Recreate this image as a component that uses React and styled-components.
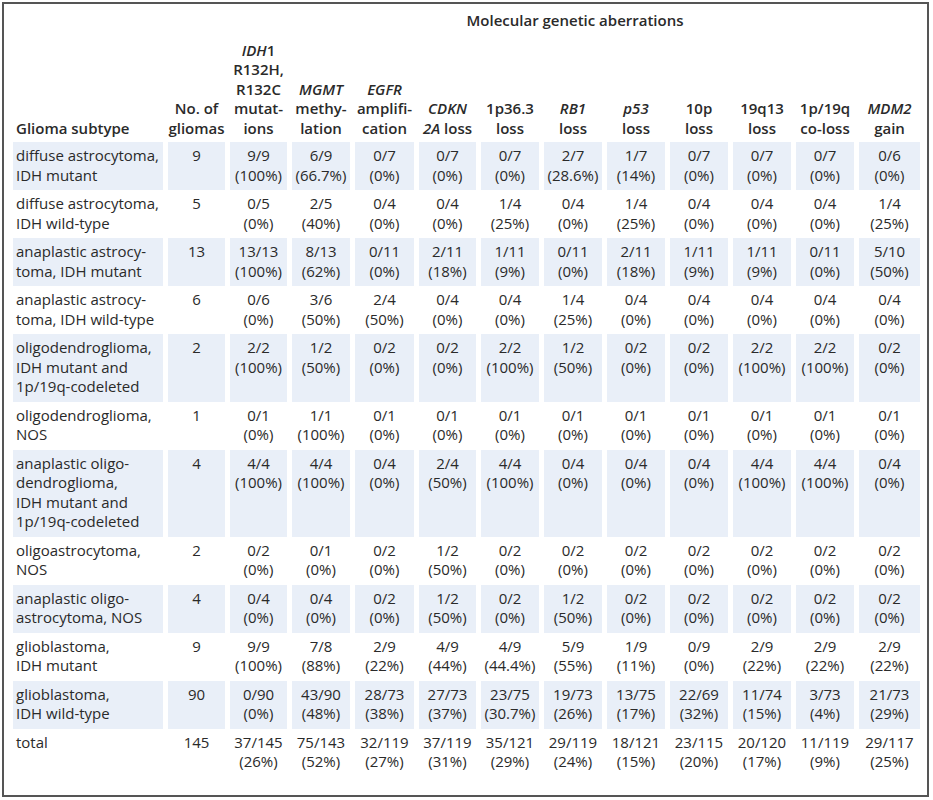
import React from "react";
import styled, { createGlobalStyle } from "styled-components";

const GlobalStyle = createGlobalStyle`
  html, body {
    margin: 0;
    padding: 0;
    background: #ffffff;
  }
  body {
    font-family: "Open Sans", "Noto Sans", sans-serif;
    color: #2a2a2a;
  }
`;

let FrameStyle = styled.div`
  box-sizing: border-box;
  margin: 2px;
  width: 927px;
  height: 795px;
  border: 2px solid #555555;
  padding: 0 0 0 4px;
  background: #ffffff;
`;

let TableStyle = styled.table`
  table-layout: fixed;
  border-collapse: separate;
  border-spacing: 5px 0;
  font-size: 15px;
  line-height: 19.5px;
  color: #2a2a2a;
`;

let GroupHeadStyle = styled.th`
  padding: 7px 0 10px;
  text-align: center;
  font-weight: 600;
  white-space: nowrap;
`;

let HeadStyle = styled.th`
  padding: 0 0 4px ${(p) => (p.$left ? "3px" : "0")};
  text-align: ${(p) => (p.$left ? "left" : "center")};
  vertical-align: bottom;
  font-weight: 600;
  white-space: nowrap;
`;

let RowStyle = styled.tr`
  & > td {
    background: ${(p) => (p.$shaded ? "#e9eff8" : "transparent")};
  }
`;

let NameCellStyle = styled.td`
  padding: 4px 0 5px 3px;
  text-align: left;
  vertical-align: top;
  white-space: nowrap;
`;

let ValueCellStyle = styled.td`
  padding: 4px 0 5px;
  text-align: center;
  vertical-align: top;
  white-space: nowrap;
`;

const widths = [150, 57, 57, 58, 59, 57, 58, 58, 58, 58, 58, 58, 61];

const heads = [
  [<i key="a">IDH</i>, "1", <br key="b" />, "R132H,", <br key="c" />, "R132C", <br key="d" />, "mutat-", <br key="e" />, "ions"],
  [<i key="a">MGMT</i>, <br key="b" />, "methy-", <br key="c" />, "lation"],
  [<i key="a">EGFR</i>, <br key="b" />, "amplifi-", <br key="c" />, "cation"],
  [<i key="a">CDKN</i>, <br key="b" />, <i key="c">2A</i>, " loss"],
  ["1p36.3", <br key="b" />, "loss"],
  [<i key="a">RB1</i>, <br key="b" />, "loss"],
  [<i key="a">p53</i>, <br key="b" />, "loss"],
  ["10p", <br key="b" />, "loss"],
  ["19q13", <br key="b" />, "loss"],
  ["1p/19q", <br key="b" />, "co-loss"],
  [<i key="a">MDM2</i>, <br key="b" />, "gain"],
];

const rows = [
  [["diffuse astrocytoma,", "IDH mutant"], "9", ["9/9", "100%"], ["6/9", "66.7%"], ["0/7", "0%"], ["0/7", "0%"], ["0/7", "0%"], ["2/7", "28.6%"], ["1/7", "14%"], ["0/7", "0%"], ["0/7", "0%"], ["0/7", "0%"], ["0/6", "0%"]],
  [["diffuse astrocytoma,", "IDH wild-type"], "5", ["0/5", "0%"], ["2/5", "40%"], ["0/4", "0%"], ["0/4", "0%"], ["1/4", "25%"], ["0/4", "0%"], ["1/4", "25%"], ["0/4", "0%"], ["0/4", "0%"], ["0/4", "0%"], ["1/4", "25%"]],
  [["anaplastic astrocy-", "toma, IDH mutant"], "13", ["13/13", "100%"], ["8/13", "62%"], ["0/11", "0%"], ["2/11", "18%"], ["1/11", "9%"], ["0/11", "0%"], ["2/11", "18%"], ["1/11", "9%"], ["1/11", "9%"], ["0/11", "0%"], ["5/10", "50%"]],
  [["anaplastic astrocy-", "toma, IDH wild-type"], "6", ["0/6", "0%"], ["3/6", "50%"], ["2/4", "50%"], ["0/4", "0%"], ["0/4", "0%"], ["1/4", "25%"], ["0/4", "0%"], ["0/4", "0%"], ["0/4", "0%"], ["0/4", "0%"], ["0/4", "0%"]],
  [["oligodendroglioma,", "IDH mutant and", "1p/19q-codeleted"], "2", ["2/2", "100%"], ["1/2", "50%"], ["0/2", "0%"], ["0/2", "0%"], ["2/2", "100%"], ["1/2", "50%"], ["0/2", "0%"], ["0/2", "0%"], ["2/2", "100%"], ["2/2", "100%"], ["0/2", "0%"]],
  [["oligodendroglioma,", "NOS"], "1", ["0/1", "0%"], ["1/1", "100%"], ["0/1", "0%"], ["0/1", "0%"], ["0/1", "0%"], ["0/1", "0%"], ["0/1", "0%"], ["0/1", "0%"], ["0/1", "0%"], ["0/1", "0%"], ["0/1", "0%"]],
  [["anaplastic oligo-", "dendroglioma,", "IDH mutant and", "1p/19q-codeleted"], "4", ["4/4", "100%"], ["4/4", "100%"], ["0/4", "0%"], ["2/4", "50%"], ["4/4", "100%"], ["0/4", "0%"], ["0/4", "0%"], ["0/4", "0%"], ["4/4", "100%"], ["4/4", "100%"], ["0/4", "0%"]],
  [["oligoastrocytoma,", "NOS"], "2", ["0/2", "0%"], ["0/1", "0%"], ["0/2", "0%"], ["1/2", "50%"], ["0/2", "0%"], ["0/2", "0%"], ["0/2", "0%"], ["0/2", "0%"], ["0/2", "0%"], ["0/2", "0%"], ["0/2", "0%"]],
  [["anaplastic oligo-", "astrocytoma, NOS"], "4", ["0/4", "0%"], ["0/4", "0%"], ["0/2", "0%"], ["1/2", "50%"], ["0/2", "0%"], ["1/2", "50%"], ["0/2", "0%"], ["0/2", "0%"], ["0/2", "0%"], ["0/2", "0%"], ["0/2", "0%"]],
  [["glioblastoma,", "IDH mutant"], "9", ["9/9", "100%"], ["7/8", "88%"], ["2/9", "22%"], ["4/9", "44%"], ["4/9", "44.4%"], ["5/9", "55%"], ["1/9", "11%"], ["0/9", "0%"], ["2/9", "22%"], ["2/9", "22%"], ["2/9", "22%"]],
  [["glioblastoma,", "IDH wild-type"], "90", ["0/90", "0%"], ["43/90", "48%"], ["28/73", "38%"], ["27/73", "37%"], ["23/75", "30.7%"], ["19/73", "26%"], ["13/75", "17%"], ["22/69", "32%"], ["11/74", "15%"], ["3/73", "4%"], ["21/73", "29%"]],
  [["total"], "145", ["37/145", "26%"], ["75/143", "52%"], ["32/119", "27%"], ["37/119", "31%"], ["35/121", "29%"], ["29/119", "24%"], ["18/121", "15%"], ["23/115", "20%"], ["20/120", "17%"], ["11/119", "9%"], ["29/117", "25%"]],
];

const Lines = ({ items }) =>
  items.map((t, i) => (
    <React.Fragment key={i}>
      {i > 0 && <br />}
      {t}
    </React.Fragment>
  ));

const App = () => {
  return (
    <>
      <GlobalStyle />
      <FrameStyle>
        <TableStyle>
          <colgroup>
            {widths.map((w, i) => (
              <col key={i} style={{ width: w }} />
            ))}
          </colgroup>
          <thead>
            <tr>
              <th />
              <th />
              <GroupHeadStyle colSpan={11}>Molecular genetic aberrations</GroupHeadStyle>
            </tr>
            <tr>
              <HeadStyle $left>Glioma subtype</HeadStyle>
              <HeadStyle>
                No. of
                <br />
                gliomas
              </HeadStyle>
              {heads.map((h, i) => (
                <HeadStyle key={i}>{h}</HeadStyle>
              ))}
            </tr>
          </thead>
          <tbody>
            {rows.map(([name, count, ...vals], r) => (
              <RowStyle key={r} $shaded={r % 2 === 0 && r < 11}>
                <NameCellStyle>
                  <Lines items={name} />
                </NameCellStyle>
                <ValueCellStyle>{count}</ValueCellStyle>
                {vals.map(([frac, pct], c) => (
                  <ValueCellStyle key={c}>
                    {frac}
                    <br />({pct})
                  </ValueCellStyle>
                ))}
              </RowStyle>
            ))}
          </tbody>
        </TableStyle>
      </FrameStyle>
    </>
  );
};

export default App;
